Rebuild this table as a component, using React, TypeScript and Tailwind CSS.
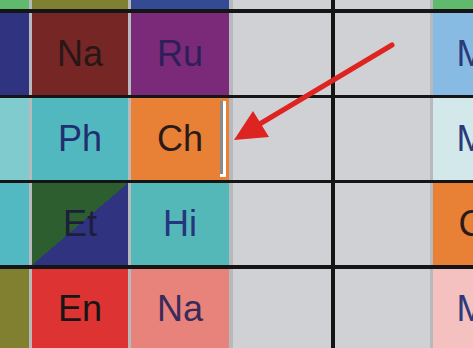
type Cell = {
  bg: string;
  text?: string;
  color?: string;
  caret?: boolean;
};

// column widths, left column is cut off by the window edge
const widths = ['w-[97px]', 'w-[96px]', 'w-[98px]', 'w-[98px]', 'w-[95px]', 'w-[97px]'];
const gaps = [
  'w-[3px] bg-[#b8b9bd]',
  'w-[3px] bg-[#b8b9bd]',
  'w-[4px] bg-[#b8b9bd]',
  'w-[4px] bg-[#151515]',
  'w-[3px] bg-[#b8b9bd]',
];

const empty: Cell = { bg: 'bg-[#d0d1d5]' };

const strip: Cell[] = [
  { bg: 'bg-[#5fba6e]' },
  { bg: 'bg-[#808032]' },
  { bg: 'bg-[#344a94]' },
  empty,
  empty,
  { bg: 'bg-[#5fba6e]' },
];

const rows: { h: string; cells: Cell[] }[] = [
  {
    h: 'h-[82px]',
    cells: [
      { bg: 'bg-[#2f3380]' },
      { bg: 'bg-[#772626]', text: 'Na', color: 'text-[#2a1616]' },
      { bg: 'bg-[#7a2a78]', text: 'Ru', color: 'text-[#2e1f58]' },
      empty,
      empty,
      { bg: 'bg-[#88bbe4]', text: 'Ma', color: 'text-[#2a3a7a]' },
    ],
  },
  {
    h: 'h-[82px]',
    cells: [
      { bg: 'bg-[#80cbcd]' },
      { bg: 'bg-[#52b8bf]', text: 'Ph', color: 'text-[#1f2f70]' },
      { bg: 'bg-[#e88035]', text: 'Ch', color: 'text-[#2a1a1a]', caret: true },
      empty,
      empty,
      { bg: 'bg-[#d2e8ea]', text: 'Ma', color: 'text-[#2a3a7a]' },
    ],
  },
  {
    h: 'h-[82px]',
    cells: [
      { bg: 'bg-[#52b8c2]' },
      {
        bg: 'bg-[linear-gradient(to_bottom_right,#2c5e30_50%,#2f3380_50%)]',
        text: 'Et',
        color: 'text-[#1e1e3a]',
      },
      { bg: 'bg-[#55b8b8]', text: 'Hi', color: 'text-[#26347e]' },
      empty,
      empty,
      { bg: 'bg-[#e88035]', text: 'Ch', color: 'text-[#2a1a1a]' },
    ],
  },
  {
    h: 'h-[79px]',
    cells: [
      { bg: 'bg-[#808030]' },
      { bg: 'bg-[#dd3333]', text: 'En', color: 'text-[#161616]' },
      { bg: 'bg-[#e8837c]', text: 'Na', color: 'text-[#3a2a5a]' },
      empty,
      empty,
      { bg: 'bg-[#f4c0c0]', text: 'Ma', color: 'text-[#2a3a7a]' },
    ],
  },
];

const Row = ({ h, cells }: { h: string; cells: Cell[] }) => (
  <div className={`flex shrink-0 ml-[-68px] ${h}`}>
    {cells.map((c, i) => (
      <div key={i} className="flex shrink-0">
        <div className={`relative flex shrink-0 items-center justify-center ${widths[i]} ${c.bg}`}>
          {c.text && (
            <span className={`font-['Liberation_Sans',sans-serif] text-[36px] leading-none ${c.color}`}>
              {c.text}
            </span>
          )}
          {c.caret && (
            <div className="absolute top-[3px] right-[3px] w-[6px] h-[76px] bg-white">
              <div className="w-[3px] h-[73px] bg-[#8a8b8f]" />
            </div>
          )}
        </div>
        {i < gaps.length && <div className={`shrink-0 ${gaps[i]}`} />}
      </div>
    ))}
  </div>
);

const Line = ({ h }: { h: string }) => <div className={`shrink-0 w-full bg-[#151515] ${h}`} />;

export default function App() {
  return (
    <div className="relative w-[473px] h-[348px] overflow-hidden bg-[#d0d1d5]">
      <div className="flex flex-col">
        <Row h="h-[9px]" cells={strip} />
        <Line h="h-[4px]" />
        <Row {...rows[0]} />
        <Line h="h-[3px]" />
        <Row {...rows[1]} />
        <Line h="h-[3px]" />
        <Row {...rows[2]} />
        <Line h="h-[4px]" />
        <Row {...rows[3]} />
      </div>

      {/* annotation arrow */}
      <svg className="absolute inset-0 pointer-events-none" width="473" height="348" viewBox="0 0 473 348">
        <line x1="392" y1="45" x2="258" y2="125" stroke="#dd2420" strokeWidth="5" strokeLinecap="round" />
        <polygon points="234,140 253,111 269,137" fill="#dd2420" />
      </svg>
    </div>
  );
}
